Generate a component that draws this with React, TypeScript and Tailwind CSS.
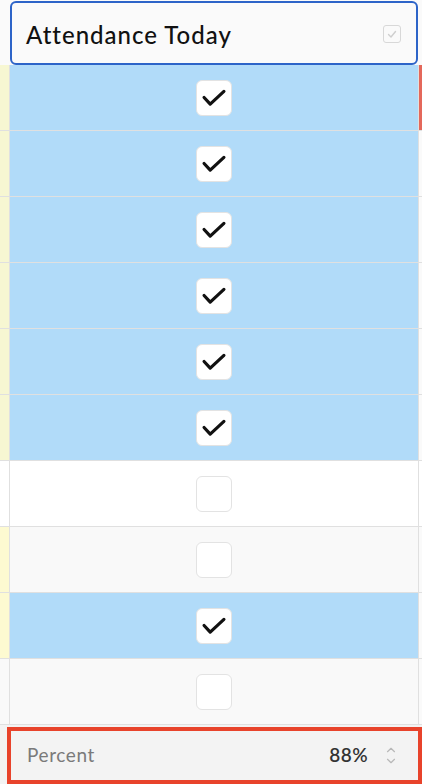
import { ChevronUp, ChevronDown } from "lucide-react";

type Row = {
  checked: boolean;
  cell: string;
  strip: string;
  edge: string;
};

const rows: Row[] = [
  { checked: true, cell: "bg-[#b1dbf9]", strip: "bg-[#f7f7d2]", edge: "bg-[#e4685b]" },
  { checked: true, cell: "bg-[#b1dbf9]", strip: "bg-[#f7f7d2]", edge: "bg-[#fafafa]" },
  { checked: true, cell: "bg-[#b1dbf9]", strip: "bg-[#f7f7d2]", edge: "bg-[#fafafa]" },
  { checked: true, cell: "bg-[#b1dbf9]", strip: "bg-[#f7f7d2]", edge: "bg-[#fafafa]" },
  { checked: true, cell: "bg-[#b1dbf9]", strip: "bg-[#f7f7d2]", edge: "bg-[#fafafa]" },
  { checked: true, cell: "bg-[#b1dbf9]", strip: "bg-[#f7f7d2]", edge: "bg-[#fafafa]" },
  { checked: false, cell: "bg-white", strip: "bg-white", edge: "bg-white" },
  { checked: false, cell: "bg-[#f9f9f9]", strip: "bg-[#fdfad1]", edge: "bg-[#fafafa]" },
  { checked: true, cell: "bg-[#b1dbf9]", strip: "bg-[#fdfad1]", edge: "bg-[#fafafa]" },
  { checked: false, cell: "bg-[#f9f9f9]", strip: "bg-[#f9f9f9]", edge: "bg-[#fafafa]" },
];

function CheckBox({ checked }: { checked: boolean }) {
  return (
    <div className="w-9 h-9 rounded-md bg-white border border-[#e3e3e3] flex items-center justify-center">
      {checked && (
        <svg width="36" height="36" viewBox="0 0 36 36" fill="none">
          <polyline
            points="7.5,17.5 14,24.5 28.5,11"
            stroke="#111"
            strokeWidth="3.4"
            strokeLinecap="round"
            strokeLinejoin="round"
          />
        </svg>
      )}
    </div>
  );
}

export default function App() {
  return (
    <div
      className="w-[422px] h-[784px] bg-[#fafafa] overflow-hidden flex flex-col"
      style={{ fontFamily: "Lato, 'Noto Sans', sans-serif" }}
    >
      <div className="h-[65px] pl-[10px] pr-[4px] pt-[1px] shrink-0">
        <div className="h-full rounded-md border-2 border-[#2d64c8] bg-[#fafafa] flex items-center justify-between pl-[14px] pr-[15px]">
          <span className="text-[24px] font-medium text-[#111] tracking-[1px] pt-[3px]">
            Attendance Today
          </span>
          <div className="w-[18px] h-[18px] mt-[2px] rounded-[3px] border border-[#d8d8d8] flex items-center justify-center">
            <svg width="12" height="12" viewBox="0 0 12 12" fill="none">
              <polyline
                points="2.5,6.5 5,9 9.5,3.5"
                stroke="#cfcfcf"
                strokeWidth="1.4"
                strokeLinecap="round"
                strokeLinejoin="round"
              />
            </svg>
          </div>
        </div>
      </div>

      {rows.map((r, i) => (
        <div key={i} className="h-[66px] flex border-b border-[#e0e0e0] shrink-0">
          <div className={`w-[10px] border-r border-[#e0e0e0] ${r.strip}`} />
          <div className={`flex-1 flex items-center justify-center border-r border-[#e0e0e0] ${r.cell}`}>
            <CheckBox checked={r.checked} />
          </div>
          <div className={`w-[3px] ${r.edge}`} />
        </div>
      ))}

      <div className="flex-1 bg-[#f3f3f3] pt-[2px] pl-[7px]">
        <div className="h-full border-4 border-[#e8432b] flex items-center pl-[16px] pr-[20px]">
          <span className="text-[19px] text-[#7a7a7a] tracking-[0.6px] flex-1">Percent</span>
          <span className="text-[19px] font-semibold text-[#333] tracking-[0.4px] mr-[16px]">88%</span>
          <div className="flex flex-col items-center text-[#b8b8b8] -space-y-[3px]">
            <ChevronUp size={14} strokeWidth={2} />
            <ChevronDown size={14} strokeWidth={2} />
          </div>
        </div>
      </div>
    </div>
  );
}
